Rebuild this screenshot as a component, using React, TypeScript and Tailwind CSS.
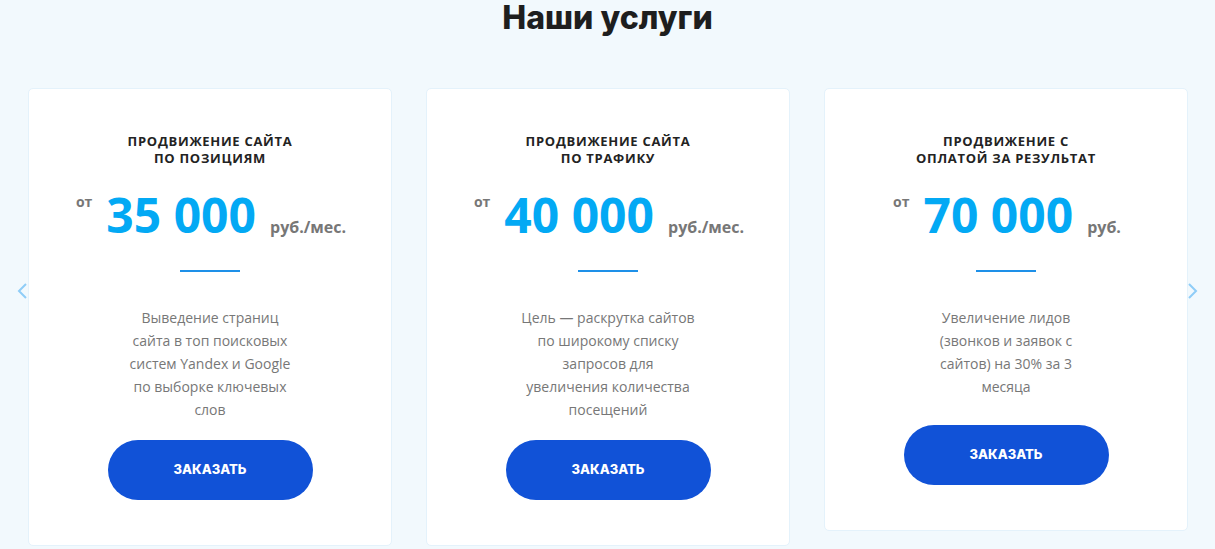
import React from 'react';

interface Service {
  title: string[];
  price: string;
  unit: string;
  text: string;
  extra?: boolean;
}

const services: Service[] = [
  {
    title: ['Продвижение сайта', 'по позициям'],
    price: '35 000',
    unit: 'руб./мес.',
    text: 'Выведение страниц сайта в топ поисковых систем Yandex и Google по выборке ключевых слов',
  },
  {
    title: ['Продвижение сайта', 'по трафику'],
    price: '40 000',
    unit: 'руб./мес.',
    text: 'Цель — раскрутка сайтов по широкому списку запросов для увеличения количества посещений',
  },
  {
    title: ['Продвижение с', 'оплатой за результат'],
    price: '70 000',
    unit: 'руб.',
    text: 'Увеличение лидов (звонков и заявок с сайтов) на 30% за 3 месяца',
    extra: true,
  },
];

const Chevron = ({ dir }: { dir: 'left' | 'right' }) => (
  <svg width="10" height="16" viewBox="0 0 10 16" fill="none" className="mt-[195px] shrink-0">
    <path
      d={dir === 'left' ? 'M9 1L2 8l7 7' : 'M1 1l7 7-7 7'}
      stroke="#8fcdf7"
      strokeWidth="2"
    />
  </svg>
);

const ServiceCard: React.FC<{ s: Service }> = ({ s }) => (
  <div className="w-[364px] bg-white border border-[#e4f2fb] rounded-[5px] pt-[44px] pb-[45px] flex flex-col items-center font-['Open_Sans',sans-serif]">
    <h3 className="text-[13px] leading-[17px] font-bold uppercase text-[#232323] text-center tracking-[0.7px]">
      {s.title[0]}
      <br />
      {s.title[1]}
    </h3>
    <div className="mt-[24px] flex items-end gap-[14px] pl-[2px]">
      <span className="self-start mt-[4px] text-[14px] leading-none font-bold text-[#777]">от</span>
      <span className="text-[48px] leading-none font-bold text-[#03a9f4]">{s.price}</span>
      <span className="text-[16px] leading-none font-bold text-[#777] mb-[4px]">{s.unit}</span>
    </div>
    <div className="mt-[31px] w-[60px] h-[2px] bg-[#1e90e8]" />
    <p className="mt-[34px] w-[176px] text-center text-[14px] leading-[23px] text-[#777]">{s.text}</p>
    <button
      className={`${s.extra ? 'mt-[27px]' : 'mt-[19px]'} w-[205px] h-[60px] rounded-full bg-[#1152d7] text-white text-[13px] font-extrabold uppercase font-['Inter',sans-serif]`}
    >
      Заказать
    </button>
  </div>
);

export default function App() {
  return (
    <div className="min-h-screen bg-[#f2f9fd]">
      <h2 className="pt-[2px] text-center text-[32px] leading-none font-extrabold text-[#1e1e1e] font-['Inter',sans-serif]">
        Наши услуги
      </h2>
      <div className="mt-[54px] flex items-start pl-[17px]">
        <Chevron dir="left" />
        <div className="ml-[1px] flex items-start gap-[34px]">
          {services.map((s) => (
            <ServiceCard key={s.price} s={s} />
          ))}
        </div>
        <Chevron dir="right" />
      </div>
    </div>
  );
}
